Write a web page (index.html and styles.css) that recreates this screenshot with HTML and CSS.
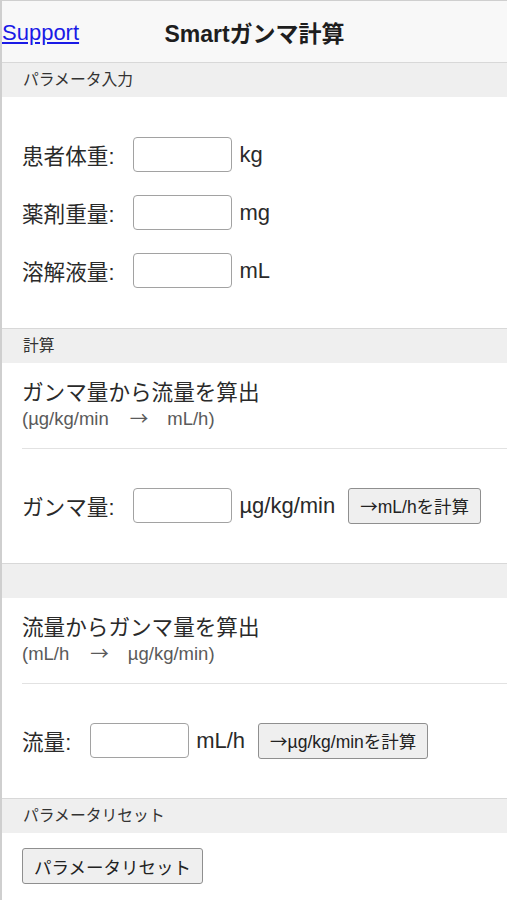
FILE: index.html
```html
<!DOCTYPE html>
<html lang="ja">
<head>
<meta charset="utf-8">
<title>Smartガンマ計算</title>
<link rel="stylesheet" href="styles.css">
</head>
<body>
<div class="page">
  <header class="topbar">
    <a class="support" href="#">Support</a>
    <h1 class="title">Smartガンマ計算</h1>
    <span class="spacer"></span>
  </header>

  <div class="sec-head">パラメータ入力</div>
  <section class="params">
    <div class="row"><span class="label">患者体重:</span><input class="field" type="text"><span class="unit">kg</span></div>
    <div class="row"><span class="label">薬剤重量:</span><input class="field" type="text"><span class="unit">mg</span></div>
    <div class="row"><span class="label">溶解液量:</span><input class="field" type="text"><span class="unit">mL</span></div>
  </section>

  <div class="sec-head">計算</div>
  <section class="calc">
    <div class="calc-title">
      <div class="calc-name">ガンマ量から流量を算出</div>
      <div class="calc-sub">(µg/kg/min<span class="arrow sub-arrow">→</span>mL/h)</div>
    </div>
    <div class="row"><span class="label">ガンマ量:</span><input class="field" type="text"><span class="unit">µg/kg/min</span><button class="btn" type="button"><span class="arrow">→</span>mL/hを計算</button></div>
  </section>

  <div class="sec-head"></div>
  <section class="calc">
    <div class="calc-title">
      <div class="calc-name">流量からガンマ量を算出</div>
      <div class="calc-sub">(mL/h<span class="arrow sub-arrow">→</span>µg/kg/min)</div>
    </div>
    <div class="row"><span class="label">流量:</span><input class="field" type="text"><span class="unit">mL/h</span><button class="btn" type="button"><span class="arrow">→</span>µg/kg/minを計算</button></div>
  </section>

  <div class="sec-head">パラメータリセット</div>
  <section class="reset">
    <button class="btn btn-reset" type="button">パラメータリセット</button>
  </section>
</div>
</body>
</html>
```

FILE: styles.css
```css
html, body {
  margin: 0;
  padding: 0;
  background: #ffffff;
}

body {
  font-family: "Liberation Sans", "Noto Sans CJK JP", sans-serif;
  font-size: 21.6px;
  color: #2a2a2a;
}

.page {
  border-left: 2px solid #cfcfcf;
  border-top: 1px solid #cfcfcf;
  min-height: 899px;
}

.topbar {
  height: 61px;
  background: #f8f8f8;
  display: grid;
  grid-template-columns: 1fr auto 1fr;
  align-items: center;
}

.support {
  justify-self: start;
  color: #1a1ae6;
  text-decoration: underline;
  font-size: 22px;
  padding-top: 3px;
}

.title {
  margin: 0;
  font-size: 23px;
  font-weight: bold;
  color: #1e1e1e;
}

.sec-head {
  height: 34px;
  border-top: 1px solid #d8d8d8;
  background: #efefef;
  padding-left: 21px;
  font-size: 15.8px;
  line-height: 34px;
  color: #333;
}

.params {
  padding: 40px 0 40px 20px;
  display: flex;
  flex-direction: column;
  gap: 23px;
}

.row {
  display: flex;
  align-items: center;
  height: 35px;
}

.label {
  margin-right: 19px;
  white-space: nowrap;
}

.field {
  box-sizing: border-box;
  width: 99px;
  height: 35px;
  margin: 0;
  padding: 0 4px;
  border: 1px solid #a2a2a2;
  border-radius: 4px;
  background: #fff;
  font: inherit;
}

.unit {
  margin-left: 7px;
  margin-right: 13px;
  font-size: 22px;
  white-space: nowrap;
}

.btn {
  box-sizing: border-box;
  height: 36px;
  margin: 0;
  padding: 0 11px 0 11px;
  border: 1px solid #8f8f8f;
  border-radius: 3px;
  background: #efefef;
  color: #222;
  font-family: "Liberation Sans", "Noto Sans CJK JP", sans-serif;
  font-size: 17.5px;
  white-space: nowrap;
}

.arrow {
  font-family: "Noto Sans CJK JP", sans-serif;
  line-height: 1;
}

.calc {
  height: 200px;
  box-sizing: border-box;
  padding-left: 20px;
}

.calc-title {
  padding-top: 16px;
  padding-bottom: 18px;
  border-bottom: 1px solid #e2e2e2;
  margin-bottom: 39px;
}

.calc-name {
  height: 28px;
  line-height: 28px;
  color: #2a2a2a;
}

.calc-sub {
  margin-top: 1px;
  height: 22px;
  line-height: 22px;
  font-size: 18.5px;
  color: #5a5a5a;
}

.sub-arrow {
  margin: 0 19px 0 21px;
}

.reset {
  padding: 15px 0 20px 20px;
}

.btn-reset {
  width: 181px;
  padding: 0 10px;
}
```
